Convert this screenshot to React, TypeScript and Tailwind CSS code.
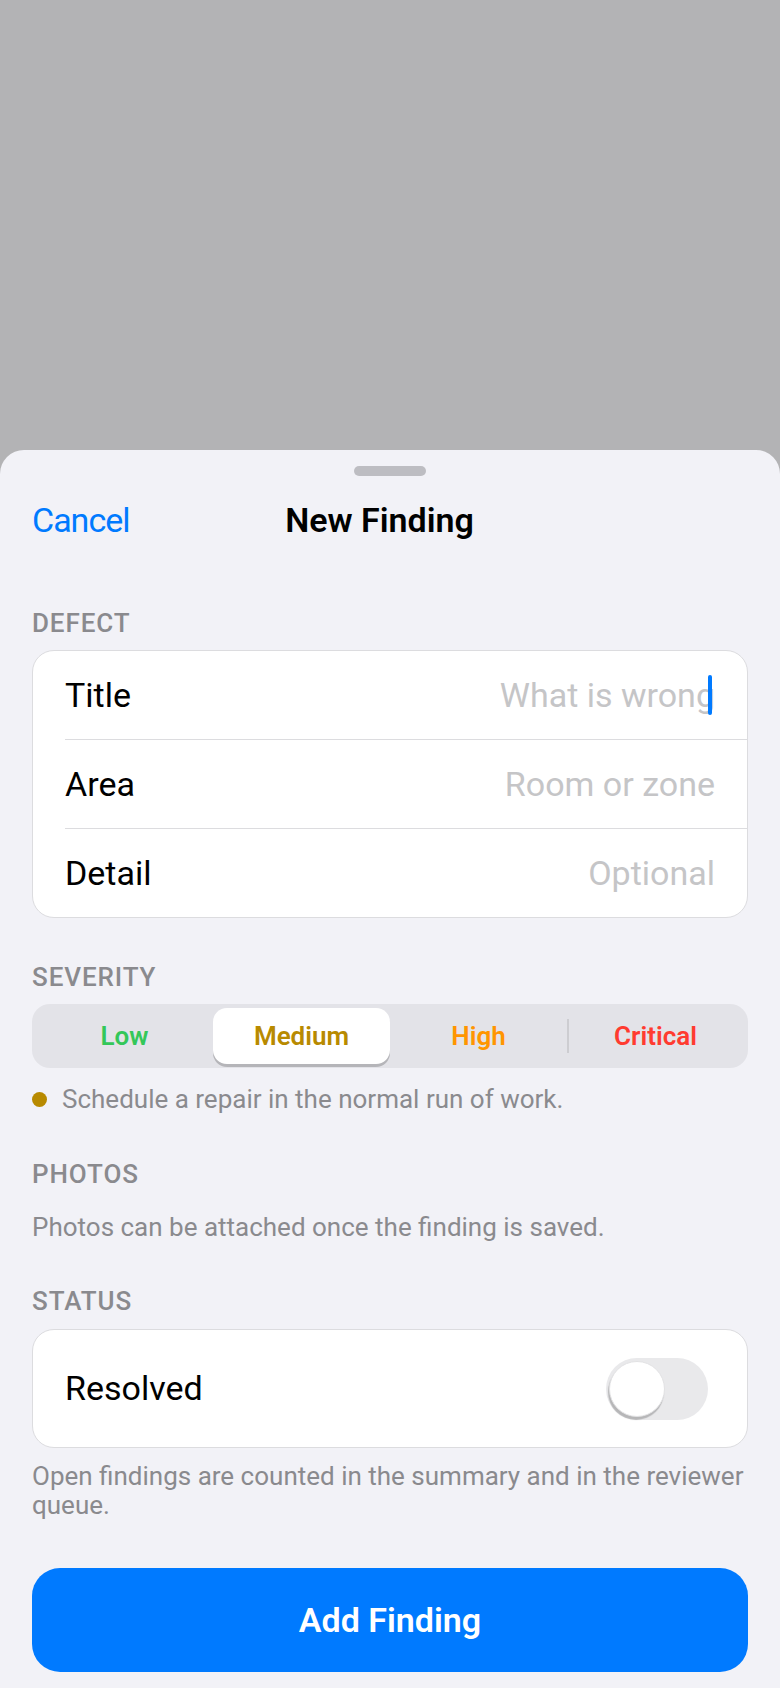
import React from "react";

const labelCls =
  "text-[26px] leading-[30px] uppercase font-medium text-[#8a8a8e] tracking-[0.9px]";
const noteCls = "text-[26px] leading-[30px] text-[#8a8a8e]";

const fields = [
  { label: "Title", placeholder: "What is wrong", focused: true },
  { label: "Area", placeholder: "Room or zone", focused: false },
  { label: "Detail", placeholder: "Optional", focused: false },
];

const severities = [
  { name: "Low", color: "text-[#34c759]" },
  { name: "Medium", color: "text-[#b88a00]" },
  { name: "High", color: "text-[#ff9500]" },
  { name: "Critical", color: "text-[#ff3b30]" },
];

function FieldRow({ label, placeholder, focused }: { label: string; placeholder: string; focused: boolean }) {
  return (
    <div className="h-[88px] px-8 flex items-center justify-between">
      <span className="text-[34px] text-black">{label}</span>
      <span className="relative text-[34px] text-[#c5c5c7]">
        {placeholder}
        {focused && (
          <span className="absolute right-[3px] top-1/2 -translate-y-1/2 w-[4px] h-[40px] rounded-full bg-[#007aff]" />
        )}
      </span>
    </div>
  );
}

function Segmented() {
  const selected = 1;
  return (
    <div className="h-[64px] p-[4px] rounded-[18px] bg-[#e3e3e8] flex">
      {severities.map((s, i) => {
        const isSel = i === selected;
        const showDivider = i > 0 && i !== selected && i - 1 !== selected;
        return (
          <div key={s.name} className="flex-1 flex items-center relative">
            {showDivider && <div className="absolute left-0 w-[2px] h-[34px] bg-[#cdcdd1]" />}
            <div
              className={`h-full w-full flex items-center justify-center rounded-[14px] text-[26px] font-semibold ${s.color} ${
                isSel ? "bg-white shadow-[0_3px_0.5px_rgba(0,0,0,0.2)]" : ""
              }`}
            >
              {s.name}
            </div>
          </div>
        );
      })}
    </div>
  );
}

function Toggle() {
  return (
    <div className="w-[102px] h-[62px] rounded-full bg-[#e9e9eb] p-[3px] flex items-center">
      <div className="w-[56px] h-[56px] rounded-full bg-white border border-[#e2e2e4] shadow-[-1px_3px_1px_rgba(0,0,0,0.22)]" />
    </div>
  );
}

export default function App() {
  return (
    <div
      className="min-h-[1688px] bg-[#b3b3b5] flex flex-col"
      style={{ fontFamily: "Roboto, 'Noto Sans', sans-serif" }}
    >
      <div className="h-[450px]" />
      <div className="flex-1 bg-[#f2f2f7] rounded-t-[24px] px-8 pb-4">
        <div className="pt-4 flex justify-center">
          <div className="w-[72px] h-[10px] rounded-full bg-[#bdbdc2]" />
        </div>

        {/* nav bar */}
        <div className="h-[88px] grid grid-cols-[1fr_auto_1fr] items-center">
          <span className="text-[34px] text-[#007aff] tracking-[-1px]">Cancel</span>
          <span className="text-[34px] font-semibold text-black pr-[21px]">New Finding</span>
          <span />
        </div>

        {/* Defect */}
        <div className={`${labelCls} mt-[44px]`}>Defect</div>
        <div className="mt-[12px] bg-white rounded-[22px] border border-[#dcdcdf] overflow-hidden">
          {fields.map((f, i) => (
            <div key={f.label}>
              {i > 0 && <div className="ml-8 h-px bg-[#dcdcdf]" />}
              <FieldRow {...f} />
            </div>
          ))}
        </div>

        {/* Severity */}
        <div className={`${labelCls} mt-[44px]`}>Severity</div>
        <div className="mt-[12px]">
          <Segmented />
        </div>
        <div className="mt-[16px] flex items-center gap-[15px]">
          <div className="w-[15px] h-[15px] rounded-full bg-[#b88a00]" />
          <span className={noteCls}>Schedule a repair in the normal run of work.</span>
        </div>

        {/* Photos */}
        <div className={`${labelCls} mt-[45px]`}>Photos</div>
        <p className={`${noteCls} mt-[23px]`}>Photos can be attached once the finding is saved.</p>

        {/* Status */}
        <div className={`${labelCls} mt-[44px]`}>Status</div>
        <div className="mt-[13px] h-[119px] bg-white rounded-[22px] border border-[#dcdcdf] pl-8 pr-[39px] flex items-center justify-between">
          <span className="text-[34px] text-black">Resolved</span>
          <Toggle />
        </div>
        <p className="mt-[14px] text-[26px] leading-[29px] text-[#8a8a8e]">
          Open findings are counted in the summary and in the reviewer queue.
        </p>

        <button className="mt-[48px] w-full h-[104px] rounded-[28px] bg-[#007aff] text-white text-[34px] font-semibold flex items-center justify-center">
          Add Finding
        </button>
      </div>
    </div>
  );
}
